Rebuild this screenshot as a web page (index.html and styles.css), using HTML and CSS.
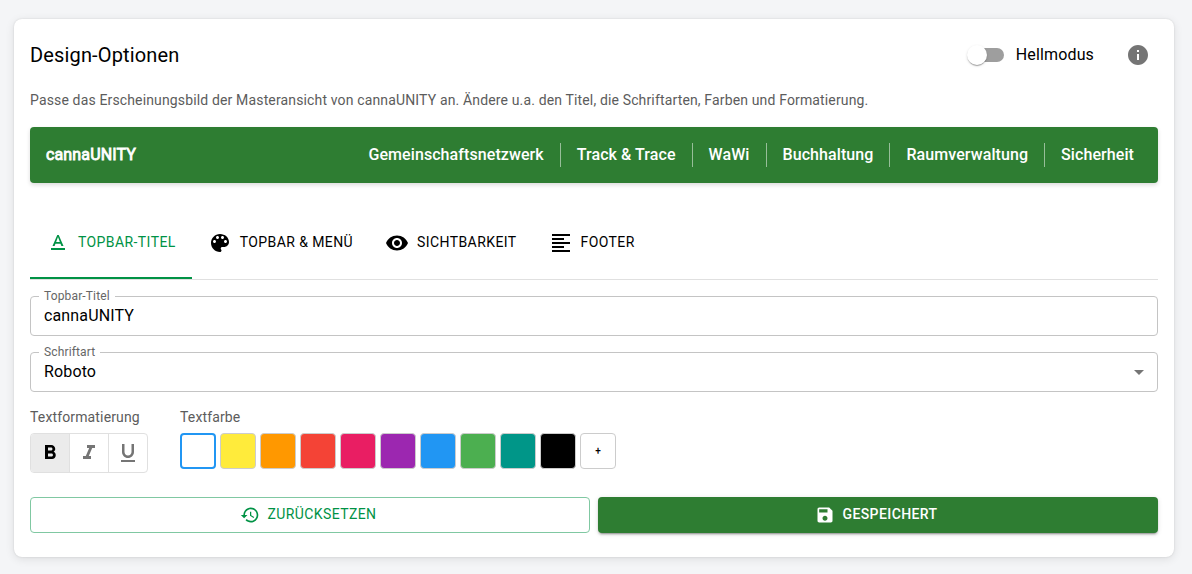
FILE: index.html
```html
<!DOCTYPE html>
<html lang="de">
<head>
<meta charset="utf-8">
<title>Design-Optionen</title>
<link rel="stylesheet" href="styles.css">
</head>
<body>
<main class="card">
  <header class="card-head">
    <h1 class="card-title">Design-Optionen</h1>
    <label class="mode"><span class="switch"><span class="thumb"></span></span>Hellmodus</label>
    <button class="info" aria-label="Info"><svg class="icon" viewBox="0 0 24 24"><path d="M12 2C6.48 2 2 6.48 2 12s4.48 10 10 10 10-4.48 10-10S17.52 2 12 2m1 15h-2v-6h2zm0-8h-2V7h2z"/></svg></button>
  </header>
  <p class="intro">Passe das Erscheinungsbild der Masteransicht von cannaUNITY an. Ändere u.a. den Titel, die Schriftarten, Farben und Formatierung.</p>

  <div class="topbar">
    <span class="brand">cannaUNITY</span>
    <nav class="menu">
      <a class="menu-item">Gemeinschaftsnetzwerk</a>
      <a class="menu-item">Track &amp; Trace</a>
      <a class="menu-item">WaWi</a>
      <a class="menu-item">Buchhaltung</a>
      <a class="menu-item">Raumverwaltung</a>
      <a class="menu-item">Sicherheit</a>
    </nav>
  </div>

  <div class="tabs">
    <button class="tab active"><svg class="icon" viewBox="0 0 24 24"><path d="M5 17v2h14v-2zm4.500-4.200h5l.9 2.200h2.100L12.750 4h-1.500L6.500 15h2.100zM12 5.980 13.870 11h-3.740z"/></svg><span class="label">TOPBAR-TITEL</span></button>
    <button class="tab"><svg class="icon" viewBox="0 0 24 24"><path d="M12 3c-4.970 0-9 4.030-9 9s4.030 9 9 9c.83 0 1.500-.67 1.500-1.500 0-.39-.15-.74-.39-1.010-.23-.26-.38-.61-.38-.99 0-.83.67-1.500 1.500-1.500H16c2.760 0 5-2.240 5-5 0-4.420-4.030-8-9-8m-5.500 9c-.83 0-1.500-.67-1.500-1.500S5.670 9 6.500 9 8 9.670 8 10.500 7.330 12 6.500 12m3-4C8.670 8 8 7.330 8 6.500S8.670 5 9.500 5s1.500.67 1.500 1.500S10.330 8 9.500 8m5 0c-.83 0-1.500-.67-1.500-1.500S13.670 5 14.500 5s1.500.67 1.500 1.500S15.330 8 14.500 8m3 4c-.83 0-1.500-.67-1.500-1.500S16.670 9 17.500 9s1.500.67 1.500 1.500-.67 1.500-1.500 1.500"/></svg><span class="label">TOPBAR &amp; MENÜ</span></button>
    <button class="tab"><svg class="icon" viewBox="0 0 24 24"><path d="M12 4.500C7 4.500 2.730 7.610 1 12c1.730 4.390 6 7.500 11 7.500s9.270-3.110 11-7.500c-1.730-4.390-6-7.500-11-7.500M12 17c-2.760 0-5-2.240-5-5s2.240-5 5-5 5 2.240 5 5-2.240 5-5 5m0-8c-1.660 0-3 1.340-3 3s1.340 3 3 3 3-1.340 3-3-1.340-3-3-3"/></svg><span class="label">SICHTBARKEIT</span></button>
    <button class="tab"><svg class="icon" viewBox="0 0 24 24"><path d="M3 21h18v-2H3zm0-4h12v-2H3zm0-4h18v-2H3zm0-4h12V7H3zm0-6v2h18V3z"/></svg><span class="label">FOOTER</span></button>
  </div>

  <div class="field"><span class="field-label">Topbar-Titel</span><span class="field-value">cannaUNITY</span></div>
  <div class="field"><span class="field-label">Schriftart</span><span class="field-value">Roboto</span><svg class="icon caret" viewBox="0 0 24 24"><path d="m7 10 5 5 5-5z"/></svg></div>

  <div class="format-row">
    <section>
      <h2 class="caption">Textformatierung</h2>
      <div class="toggles">
        <button class="toggle selected" aria-label="Fett"><svg class="icon" viewBox="0 0 24 24"><path d="M15.600 10.790c.97-.67 1.650-1.770 1.650-2.790 0-2.260-1.750-4-4-4H7v14h7.040c2.090 0 3.710-1.700 3.710-3.790 0-1.520-.86-2.820-2.150-3.420M10 6.500h3c.83 0 1.500.67 1.500 1.500s-.67 1.500-1.500 1.500h-3zm3.500 9H10v-3h3.500c.83 0 1.500.67 1.500 1.500s-.67 1.500-1.500 1.500"/></svg></button>
        <button class="toggle" aria-label="Kursiv"><svg class="icon" viewBox="0 0 24 24"><path d="M10 4v3h2.210l-3.420 8H6v3h8v-3h-2.210l3.420-8H18V4z"/></svg></button>
        <button class="toggle" aria-label="Unterstrichen"><svg class="icon" viewBox="0 0 24 24"><path d="M12 17c3.310 0 6-2.690 6-6V3h-2.500v8c0 1.930-1.570 3.500-3.500 3.500S8.500 12.930 8.500 11V3H6v8c0 3.310 2.690 6 6 6m-7 2v2h14v-2z"/></svg></button>
      </div>
    </section>
    <section>
      <h2 class="caption">Textfarbe</h2>
      <div class="swatches">
        <span class="swatch white"></span>
        <span class="swatch yellow"></span>
        <span class="swatch orange"></span>
        <span class="swatch red"></span>
        <span class="swatch pink"></span>
        <span class="swatch purple"></span>
        <span class="swatch blue"></span>
        <span class="swatch green"></span>
        <span class="swatch teal"></span>
        <span class="swatch black"></span>
        <span class="swatch add">+</span>
      </div>
    </section>
  </div>

  <div class="actions">
    <button class="btn outlined"><svg class="icon" viewBox="0 0 24 24"><path d="M13 3c-4.970 0-9 4.030-9 9H1l3.890 3.890.07.14L9 12H6c0-3.870 3.130-7 7-7s7 3.130 7 7-3.130 7-7 7c-1.930 0-3.680-.79-4.940-2.060l-1.420 1.420C8.270 19.990 10.510 21 13 21c4.970 0 9-4.030 9-9s-4.030-9-9-9m-1 5v5l4.280 2.540.72-1.210-3.500-2.080V8z"/></svg><span class="label">ZURÜCKSETZEN</span></button>
    <button class="btn contained"><svg class="icon" viewBox="0 0 24 24"><path d="M17 3H5c-1.110 0-2 .9-2 2v14c0 1.100.89 2 2 2h14c1.100 0 2-.9 2-2V7zm-5 16c-1.660 0-3-1.340-3-3s1.340-3 3-3 3 1.340 3 3-1.340 3-3 3m3-10H5V5h10z"/></svg><span class="label">GESPEICHERT</span></button>
  </div>
</main>
</body>
</html>
```
FILE: styles.css
```css
* { box-sizing: border-box; }

body {
  margin: 0;
  padding: 19px 18px 17px 14px;
  background: #f4f5f7;
  color: #000;
  font: 400 16px/24px Roboto, sans-serif;
  letter-spacing: .14px;
}

button {
  margin: 0;
  padding: 0;
  border: 0;
  background: none;
  color: inherit;
  font: inherit;
}

.icon {
  display: block;
  flex: none;
  width: 24px;
  height: 24px;
  fill: currentColor;
}

.label { padding-bottom: 2px; }

.card {
  height: 538px;
  padding: 16px;
  border-radius: 8px;
  background: #fff;
  box-shadow: 0 0 2px rgba(0, 0, 0, .12), 0 2px 10px rgba(0, 0, 0, .1);
}

.card-head {
  display: flex;
  align-items: center;
  height: 40px;
}

.card-title {
  flex: 1;
  margin: 0;
  font-size: 20px;
  font-weight: 400;
  letter-spacing: .15px;
  line-height: 32px;
}

.mode {
  display: flex;
  align-items: center;
  margin-right: 24px;
}

.switch {
  display: flex;
  align-items: center;
  width: 34px;
  height: 14px;
  margin: 0 12px;
  border-radius: 7px;
  background: #9e9e9e;
}

.thumb {
  flex: none;
  width: 20px;
  height: 20px;
  margin-left: -3px;
  border-radius: 50%;
  background: #fff;
  box-shadow: 0 2px 1px -1px rgba(0, 0, 0, .2), 0 1px 1px rgba(0, 0, 0, .14), 0 1px 3px rgba(0, 0, 0, .12);
}

.info {
  display: grid;
  place-items: center;
  width: 40px;
  height: 40px;
  color: #757575;
}

.intro {
  margin: 15px 0 17px;
  color: #5c5c5c;
  font-size: 14px;
  letter-spacing: .147px;
  line-height: 20px;
}

.topbar {
  display: flex;
  align-items: center;
  justify-content: space-between;
  height: 56px;
  padding: 0 8px 0 16px;
  border-radius: 4px;
  background: #2e7d32;
  color: #fff;
  box-shadow: 0 2px 4px rgba(0, 0, 0, .14);
}

.brand { -webkit-text-stroke: .8px #fff; }

.menu {
  display: flex;
  font-weight: 500;
  letter-spacing: .08px;
}

.menu-item { padding: 0 16px; }

.menu-item + .menu-item { border-left: 1px solid rgba(255, 255, 255, .5); }

.tabs {
  display: flex;
  height: 73px;
  margin: 24px 0 16px;
  border-bottom: 1px solid #e0e0e0;
}

.tab {
  display: flex;
  align-items: center;
  gap: 8px;
  height: 72px;
  padding: 0 16px;
  font-size: 14px;
  letter-spacing: .41px;
}

.tab.active {
  color: #009245;
  box-shadow: inset 0 -2px #009245;
}

.field {
  position: relative;
  display: flex;
  align-items: center;
  justify-content: space-between;
  height: 40px;
  margin-bottom: 16px;
  padding: 0 6px 0 13px;
  border: 1px solid #c4c4c4;
  border-radius: 4px;
}

.field-label {
  position: absolute;
  top: -9px;
  left: 8px;
  padding: 0 5px;
  background: #fff;
  color: #666;
  font-size: 12px;
  line-height: 16px;
}

.caret { color: #757575; }

.format-row {
  display: flex;
  gap: 32px;
}

.caption {
  margin: 0 0 6px;
  color: #5c5c5c;
  font-size: 14px;
  font-weight: 400;
  line-height: 19px;
}

.toggles {
  display: flex;
  width: 118px;
  height: 40px;
  border: 1px solid #e0e0e0;
  border-radius: 4px;
  overflow: hidden;
}

.toggle {
  display: grid;
  place-items: center;
  flex: 1;
  color: #757575;
}

.toggle + .toggle { border-left: 1px solid #e0e0e0; }

.toggle.selected {
  background: #ebebeb;
  color: #000;
}

.swatches {
  display: flex;
  gap: 4px;
}

.swatch {
  width: 36px;
  height: 36px;
  border: 1px solid #ccc;
  border-radius: 4px;
}

.white { border: 2px solid #2196f3; background: #fff; }
.yellow { background: #ffeb3b; }
.orange { background: #ff9800; }
.red { background: #f44336; }
.pink { background: #e91e63; }
.purple { background: #9c27b0; }
.blue { background: #2196f3; }
.green { background: #4caf50; }
.teal { background: #009688; }
.black { background: #000; }

.add {
  display: grid;
  place-items: center;
  font-size: 10px;
  font-weight: 500;
}

.actions {
  display: grid;
  grid-template-columns: 1fr 1fr;
  gap: 8px;
  margin-top: 24px;
}

.btn {
  display: flex;
  align-items: center;
  justify-content: center;
  gap: 8px;
  height: 36px;
  padding-right: 4px;
  border-radius: 4px;
  font-size: 14px;
  letter-spacing: .4px;
}

.btn .icon {
  width: 20px;
  height: 20px;
}

.outlined {
  border: 1px solid #80c8a2;
  color: #009245;
}

.contained {
  background: #2e7d32;
  color: #fff;
  font-weight: 500;
  box-shadow: 0 3px 1px -2px rgba(0, 0, 0, .2), 0 2px 2px rgba(0, 0, 0, .14), 0 1px 5px rgba(0, 0, 0, .12);
}
```
